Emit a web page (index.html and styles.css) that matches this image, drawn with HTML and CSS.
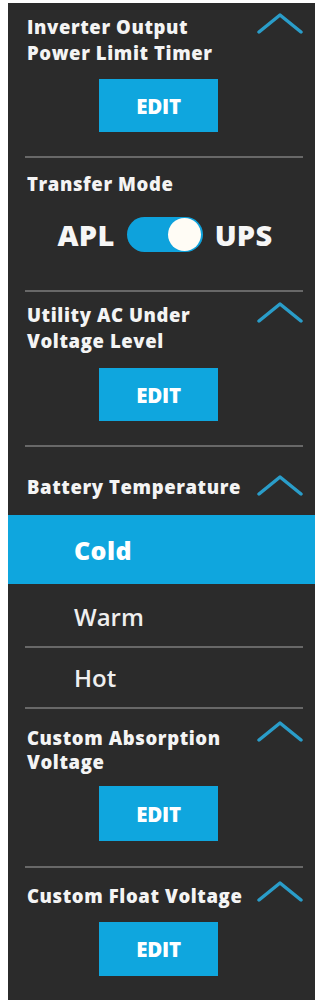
FILE: index.html
```html
<!DOCTYPE html>
<html lang="en">
<head>
<meta charset="utf-8">
<title>Settings</title>
<link rel="stylesheet" href="styles.css">
</head>
<body>
<div class="panel">
  <section class="group g1">
    <div class="header">
      <h2 class="title">Inverter Output<br>Power Limit Timer</h2>
      <svg class="chev" viewBox="0 0 46 22" width="46" height="22"><polyline points="2,20 23,3 44,20"/></svg>
    </div>
    <button class="edit">EDIT</button>
  </section>
  <div class="divider"></div>
  <section class="group g2">
    <h2 class="title">Transfer Mode</h2>
    <div class="toggle-row">
      <span class="opt">APL</span>
      <span class="switch"><span class="knob"></span></span>
      <span class="opt">UPS</span>
    </div>
  </section>
  <div class="divider"></div>
  <section class="group g3">
    <div class="header">
      <h2 class="title">Utility AC Under<br>Voltage Level</h2>
      <svg class="chev" viewBox="0 0 46 22" width="46" height="22"><polyline points="2,20 23,3 44,20"/></svg>
    </div>
    <button class="edit">EDIT</button>
  </section>
  <div class="divider"></div>
  <section class="group g4">
    <div class="header">
      <h2 class="title">Battery Temperature</h2>
      <svg class="chev" viewBox="0 0 46 22" width="46" height="22"><polyline points="2,20 23,3 44,20"/></svg>
    </div>
    <ul class="options">
      <li class="option selected">Cold</li>
      <li class="option warm">Warm</li>
      <li class="divider"></li>
      <li class="option hot">Hot</li>
    </ul>
  </section>
  <div class="divider"></div>
  <section class="group g5">
    <div class="header">
      <h2 class="title tight">Custom Absorption<br>Voltage</h2>
      <svg class="chev" viewBox="0 0 46 22" width="46" height="22"><polyline points="2,20 23,3 44,20"/></svg>
    </div>
    <button class="edit">EDIT</button>
  </section>
  <div class="divider"></div>
  <section class="group g6">
    <div class="header">
      <h2 class="title">Custom Float Voltage</h2>
      <svg class="chev" viewBox="0 0 46 22" width="46" height="22"><polyline points="2,20 23,3 44,20"/></svg>
    </div>
    <button class="edit">EDIT</button>
  </section>
</div>
</body>
</html>
```

FILE: styles.css
```css
* { box-sizing: border-box; }
html, body { margin: 0; padding: 0; background: #ffffff; }
body {
  font-family: "Open Sans", "Liberation Sans", sans-serif;
  color: #f4f4f4;
}
.panel {
  width: 307px;
  height: 997px;
  margin: 3px 0 0 8px;
  background: #2b2b2b;
  display: flex;
  flex-direction: column;
}
.group { display: flex; flex-direction: column; }
.header {
  display: flex;
  justify-content: space-between;
  align-items: flex-start;
  padding: 0 12px 0 19px;
}
.title {
  margin: 0;
  font-size: 18.5px;
  font-weight: 800;
  line-height: 26px;
  color: #f4f4f4;
  letter-spacing: 0.6px;
  white-space: nowrap;
}
.title.tight { line-height: 24px; }
.chev { display: block; flex: none; }
.chev polyline {
  fill: none;
  stroke: #2a9dc9;
  stroke-width: 3.5;
  stroke-linecap: round;
  stroke-linejoin: round;
}
.divider {
  height: 2px;
  background: #686868;
  margin: 0 12px 0 17px;
  flex: none;
  list-style: none;
}
.edit {
  display: block;
  width: 119px;
  height: 53px;
  margin: 0 0 0 91px;
  border: 0;
  padding: 0;
  background: #0fa6de;
  color: #ffffff;
  font-family: "Open Sans", "Liberation Sans", sans-serif;
  font-size: 20.5px;
  font-weight: 800;
  letter-spacing: -0.2px;
}

/* Section 1 */
.g1 { padding-top: 11px; }
.g1 .chev { margin-top: -2px; }
.g1 .edit { margin-top: 13px; margin-bottom: 24px; }

/* Section 2 */
.g2 { padding: 13px 0 0 19px; }
.toggle-row {
  display: flex;
  align-items: center;
  justify-content: center;
  gap: 12px;
  margin: 20px 0 38px -12px;
  height: 35px;
}
.opt {
  font-size: 29px;
  font-weight: 800;
  line-height: 35px;
  color: #f6f6f6;
  letter-spacing: 0.3px;
}
.switch {
  position: relative;
  width: 76px;
  height: 35px;
  border-radius: 18px;
  background: #0ea2dc;
  display: flex;
  justify-content: flex-end;
  align-items: center;
  padding: 0 2px;
}
.knob {
  width: 33px;
  height: 33px;
  border-radius: 50%;
  background: #fffcf5;
}

/* Section 3 */
.g3 { padding-top: 10px; }
.g3 .chev { margin-top: -1px; }
.g3 .edit { margin-top: 14px; margin-bottom: 24px; }

/* Section 4 */
.g4 { padding-top: 27px; }
.g4 .chev { margin-top: 0; }
.options {
  list-style: none;
  margin: 15px 0 0 0;
  padding: 0;
}
.option {
  padding-left: 66px;
  font-size: 24px;
  color: #efefef;
  display: flex;
  align-items: center;
}
.option.selected {
  height: 69px;
  background: #0fa6de;
  font-weight: 800;
  font-size: 25px;
  letter-spacing: 0.4px;
  color: #ffffff;
}
.option.warm { height: 62px; font-weight: 600; padding-top: 2px; }
.option.hot { height: 59px; font-weight: 600; }

/* Section 5 */
.g5 { padding-top: 17px; }
.g5 .chev { margin-top: -6px; }
.g5 .edit { margin-top: 12px; margin-bottom: 25px; height: 55px; }

/* Section 6 */
.g6 { padding-top: 15px; }
.g6 .chev { margin-top: -3px; }
.g6 .edit { margin-top: 13px; height: 54px; }
```
